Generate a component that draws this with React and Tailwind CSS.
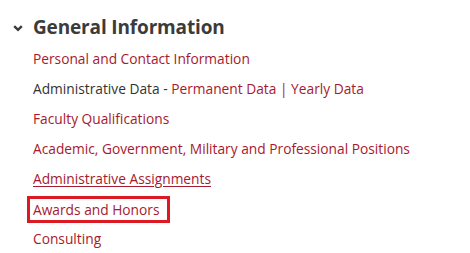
import React from 'react';

const linkCls = 'text-[#a6192e]';

const App = () => {
  return (
    <div className="w-[470px] h-[253px] bg-white font-['Open_Sans',sans-serif] text-[13.75px] pt-[13px]">
      <div className="flex items-center h-[28px]">
        <span className="w-[33px] flex pl-[13px]">
          <svg width="10" height="7" viewBox="0 0 10 7" className="mt-[2px]">
            <path d="M1.2 1.2 L5 4.8 L8.8 1.2" fill="none" stroke="#3a3a3a" strokeWidth="2.4" />
          </svg>
        </span>
        <h2 className="text-[19px] font-bold tracking-[-0.15px] text-[#3b3b3b] leading-[28px]">General Information</h2>
      </div>
      <ul className="mt-[3px] pl-[33px]">
        <li className="h-[30px] flex items-center">
          <a className={linkCls}>Personal and Contact Information</a>
        </li>
        <li className="h-[30px] flex items-center text-[#333]">
          <span>Administrative Data -&nbsp;</span>
          <a className={linkCls}>Permanent Data</a>
          <span className="text-[#a6192e]">&nbsp;|&nbsp;</span>
          <a className={linkCls}>Yearly Data</a>
        </li>
        <li className="h-[30px] flex items-center">
          <a className={linkCls}>Faculty Qualifications</a>
        </li>
        <li className="h-[30px] flex items-center">
          <a className={linkCls}>Academic, Government, Military and Professional Positions</a>
        </li>
        <li className="h-[30px] flex items-center">
          <a className={`${linkCls} underline underline-offset-2`}>Administrative Assignments</a>
        </li>
        <li className="h-[30px] flex items-center">
          <a className={`${linkCls} -ml-[6px] border-[3px] border-[#dc1a23] pl-[3px] pr-[7px] leading-[21px]`}>
            Awards and Honors
          </a>
        </li>
        <li className="h-[30px] flex items-center">
          <a className={linkCls}>Consulting</a>
        </li>
      </ul>
    </div>
  );
};

export default App;
